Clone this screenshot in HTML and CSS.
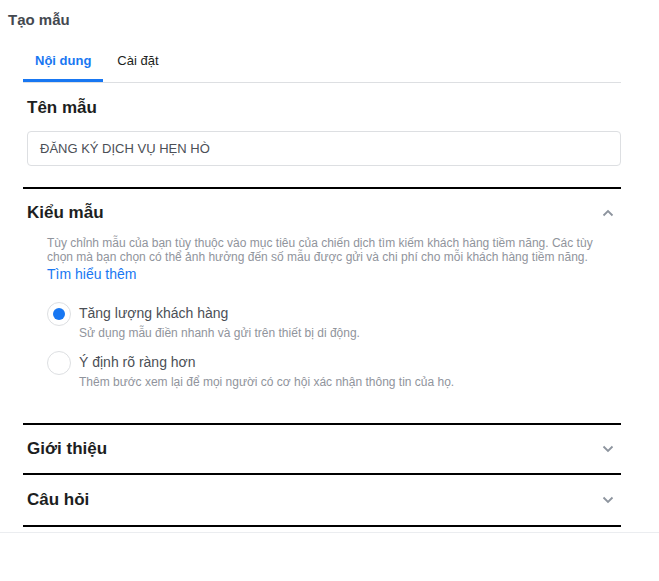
FILE: index.html
```
<!DOCTYPE html>
<html lang="vi">
<head>
    <meta charset="UTF-8">
    <meta name="viewport" content="width=device-width, initial-scale=1.0">
    <title>Tạo mẫu</title>
    <link rel="stylesheet" href="styles.css">
</head>
<body>
    <h1 class="page-title">Tạo mẫu</h1>

    <div class="panel">
        <nav class="tabs">
            <a class="tab active" href="#">Nội dung</a>
            <a class="tab" href="#">Cài đặt</a>
        </nav>

        <!-- Tên mẫu -->
        <section class="name-block">
            <h2>Tên mẫu</h2>
            <div class="text-input">ĐĂNG KÝ DỊCH VỤ HẸN HÒ</div>
        </section>

        <!-- Kiểu mẫu -->
        <section class="group open">
            <div class="group-head">
                <h2>Kiểu mẫu</h2>
                <svg class="chevron" width="12" height="8" viewBox="0 0 12 8"><path d="M1.5 6.5 L6 2 L10.5 6.5" fill="none" stroke="#8d949e" stroke-width="1.8"/></svg>
            </div>
            <div class="group-body">
                <p class="desc">Tùy chỉnh mẫu của bạn tùy thuộc vào mục tiêu của chiến dịch tìm kiếm khách hàng tiềm năng. Các tùy chọn mà bạn chọn có thể ảnh hưởng đến số mẫu được gửi và chi phí cho mỗi khách hàng tiềm năng.</p>
                <a class="learn-more" href="#">Tìm hiểu thêm</a>

                <div class="option">
                    <span class="radio checked"></span>
                    <div>
                        <div class="option-label">Tăng lượng khách hàng</div>
                        <div class="option-sub">Sử dụng mẫu điền nhanh và gửi trên thiết bị di động.</div>
                    </div>
                </div>
                <div class="option">
                    <span class="radio"></span>
                    <div>
                        <div class="option-label">Ý định rõ ràng hơn</div>
                        <div class="option-sub">Thêm bước xem lại để mọi người có cơ hội xác nhận thông tin của họ.</div>
                    </div>
                </div>
            </div>
        </section>

        <section class="group">
            <div class="group-head">
                <h2>Giới thiệu</h2>
                <svg class="chevron" width="12" height="8" viewBox="0 0 12 8"><path d="M1.5 1.5 L6 6 L10.5 1.5" fill="none" stroke="#8d949e" stroke-width="1.8"/></svg>
            </div>
        </section>

        <section class="group last">
            <div class="group-head">
                <h2>Câu hỏi</h2>
                <svg class="chevron" width="12" height="8" viewBox="0 0 12 8"><path d="M1.5 1.5 L6 6 L10.5 1.5" fill="none" stroke="#8d949e" stroke-width="1.8"/></svg>
            </div>
        </section>
    </div>

    <div class="footer-line"></div>
</body>
</html>
```

FILE: styles.css
```
body {
    font-family: "Liberation Sans", Arial, sans-serif;
    margin: 0;
    padding: 0;
    color: #1c1e21;
    background: #fff;
}
.page-title {
    margin: 0;
    padding: 10px 8px 0;
    font-size: 15px;
    line-height: 20px;
    font-weight: bold;
    color: #444950;
}
.panel {
    margin-left: 23px;
    width: 598px;
}
.tabs {
    display: flex;
    margin-top: 14px;
    border-bottom: 1px solid #dddfe2;
}
.tab {
    padding: 7px 12px 8px;
    font-size: 13px;
    line-height: 20px;
    color: #1c1e21;
    text-decoration: none;
    border-bottom: 3px solid transparent;
}
.tab.active {
    color: #1877f2;
    font-weight: bold;
    border-bottom-color: #1877f2;
}
.tab + .tab {
    padding-left: 14px;
}
.name-block {
    padding: 0 0 21px 4px;
}
h2 {
    margin: 0;
    font-size: 17px;
    line-height: 22px;
    font-weight: bold;
    color: #1c1e21;
}
.name-block h2 {
    margin-top: 14px;
    margin-bottom: 12px;
}
.text-input {
    height: 33px;
    line-height: 33px;
    border: 1px solid #dddfe2;
    border-radius: 4px;
    padding: 0 12px;
    font-size: 13px;
    color: #4b4f56;
}
.group {
    border-top: 2px solid #000;
}
.group.last {
    border-bottom: 2px solid #000;
}
.group-head {
    display: flex;
    justify-content: space-between;
    align-items: center;
    padding: 13px 7px 13px 4px;
}
.group.open .group-head {
    padding-bottom: 12px;
}
.group.last .group-head {
    padding: 14px 7px 14px 4px;
}
.group-body {
    padding: 0 0 32px 24px;
}
.desc {
    margin: 0;
    font-size: 12px;
    line-height: 14px;
    color: #90949c;
}
.learn-more {
    display: block;
    font-size: 14px;
    line-height: 20px;
    color: #1877f2;
    text-decoration: none;
}
.option {
    display: flex;
    gap: 8px;
    margin-top: 19px;
}
.option + .option {
    margin-top: 10px;
}
.radio {
    width: 22px;
    height: 22px;
    margin-top: -1px;
    border: 1px solid #dddfe2;
    border-radius: 50%;
    display: flex;
    align-items: center;
    justify-content: center;
    flex-shrink: 0;
}
.radio.checked::after {
    content: '';
    width: 12px;
    height: 12px;
    border-radius: 50%;
    background: #1877f2;
}
.option-label {
    font-size: 14px;
    line-height: 20px;
    color: #4b4f56;
}
.option-sub {
    margin-top: 1px;
    font-size: 12px;
    line-height: 18px;
    color: #90949c;
}
.footer-line {
    margin-top: 5px;
    border-top: 1px solid #ebedf0;
}
```
